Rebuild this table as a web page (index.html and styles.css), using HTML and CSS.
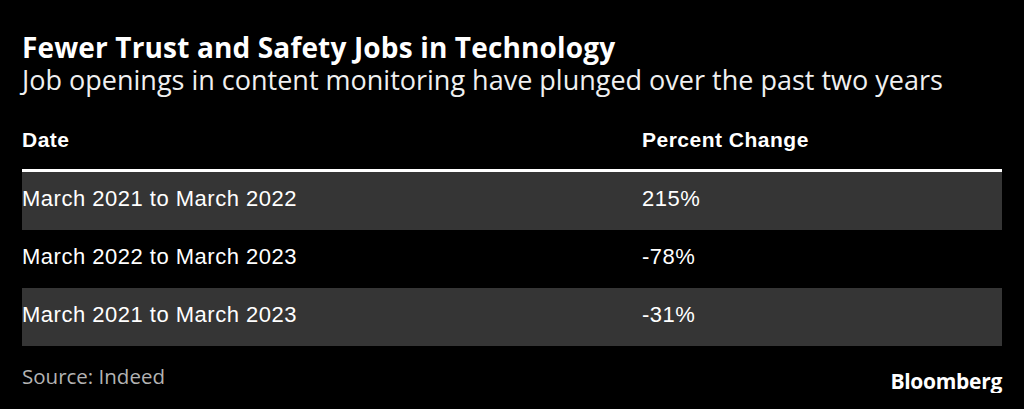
FILE: index.html
```html
<!DOCTYPE html>
<html lang="en">
<head>
<meta charset="utf-8">
<title>Fewer Trust and Safety Jobs in Technology</title>
<link rel="stylesheet" href="styles.css">
</head>
<body>
<main class="chart">
  <header class="chart-head">
    <h1 class="title">Fewer Trust and Safety Jobs in Technology</h1>
    <p class="subtitle">Job openings in content monitoring have plunged over the past two years</p>
  </header>
  <div class="table">
    <div class="row head-row">
      <div class="cell">Date</div>
      <div class="cell">Percent Change</div>
    </div>
    <div class="row shaded">
      <div class="cell">March 2021 to March 2022</div>
      <div class="cell">215%</div>
    </div>
    <div class="row">
      <div class="cell">March 2022 to March 2023</div>
      <div class="cell">-78%</div>
    </div>
    <div class="row shaded">
      <div class="cell">March 2021 to March 2023</div>
      <div class="cell">-31%</div>
    </div>
  </div>
  <footer class="chart-foot">
    <span class="source">Source: Indeed</span>
    <span class="logo">Bloomberg</span>
  </footer>
</main>
</body>
</html>
```
FILE: styles.css
```css
html, body {
  margin: 0;
  padding: 0;
  background: #000;
}

.chart {
  padding: 31px 22px 0 22px;
  color: #fff;
}

.title {
  margin: 0;
  font-family: "Open Sans", sans-serif;
  font-weight: 700;
  font-size: 28px;
  line-height: 32px;
  letter-spacing: 0.15px;
  color: #fff;
}

.subtitle {
  margin: 1px 0 0 0;
  font-family: "Open Sans", sans-serif;
  font-weight: 400;
  font-size: 27px;
  line-height: 32px;
  color: #f0f0f0;
}

.table {
  margin-top: 32px;
  font-family: "Liberation Sans", Arial, sans-serif;
}

.row {
  display: grid;
  grid-template-columns: 620px 1fr;
  height: 58px;
  box-sizing: border-box;
  font-size: 22px;
  line-height: 24px;
  letter-spacing: 0.5px;
  padding-top: 15px;
}

.row .cell {
  white-space: nowrap;
}

.head-row {
  height: auto;
  padding-top: 0;
  padding-bottom: 17px;
  font-size: 21px;
  font-weight: 700;
  border-bottom: 3px solid #fff;
}

.shaded {
  background: #353535;
}

.chart-foot {
  display: flex;
  justify-content: space-between;
  align-items: flex-start;
  margin-top: 18px;
}

.source {
  font-family: "Open Sans", sans-serif;
  font-size: 20.5px;
  line-height: 24px;
  color: #b3b3b3;
}

.logo {
  margin-top: 5px;
  font-family: "Open Sans", sans-serif;
  font-weight: 700;
  font-size: 21px;
  line-height: 24px;
  letter-spacing: -0.3px;
  color: #fff;
}
```
